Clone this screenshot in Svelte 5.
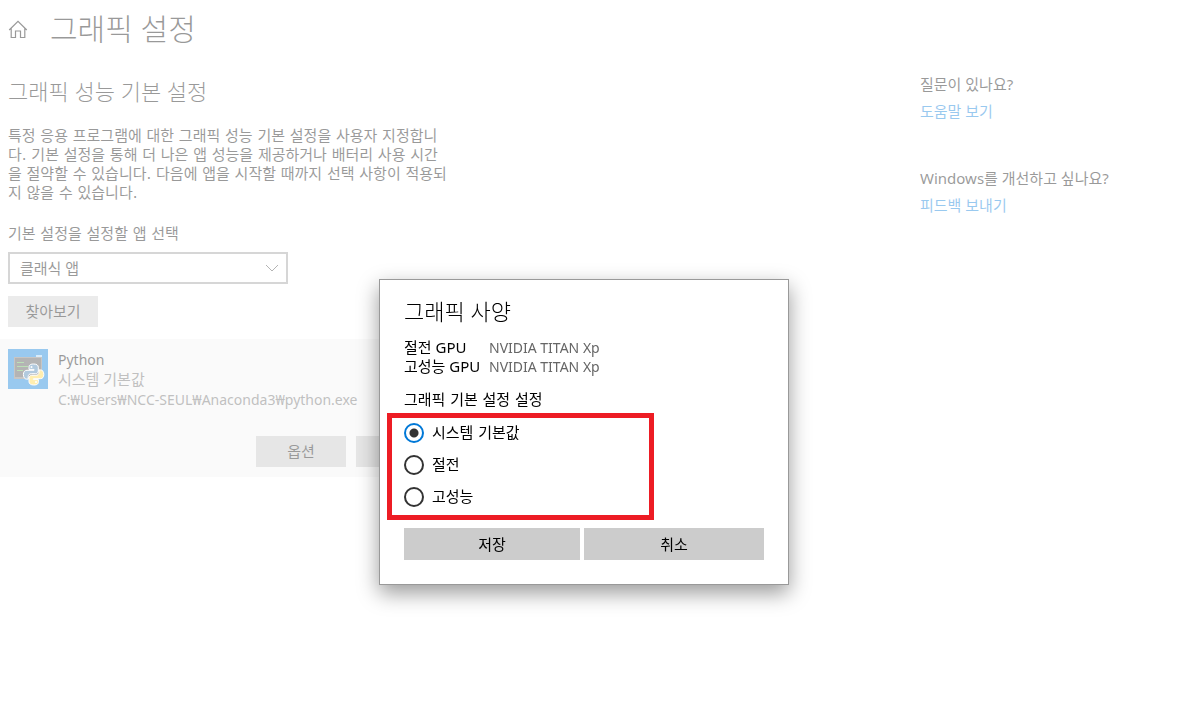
<script>
  const description = [
    "특정 응용 프로그램에 대한 그래픽 성능 기본 설정을 사용자 지정합니",
    "다. 기본 설정을 통해 더 나은 앱 성능을 제공하거나 배터리 사용 시간",
    "을 절약할 수 있습니다. 다음에 앱을 시작할 때까지 선택 사항이 적용되",
    "지 않을 수 있습니다."
  ];
  const gpus = [
    { name: "절전 GPU", model: "NVIDIA TITAN Xp" },
    { name: "고성능 GPU", model: "NVIDIA TITAN Xp" }
  ];
  const options = [
    { value: "default", label: "시스템 기본값" },
    { value: "saving", label: "절전" },
    { value: "high", label: "고성능" }
  ];
  let preference = $state("default");
  let appType = $state("classic");
</script>

<div class="page">
  <header>
    <a class="home" href="#home" aria-label="홈">
      <svg viewBox="0 0 20 20" width="20" height="20">
        <path d="M1.2 11 L10 2.4 L18.8 11 M3.200 9.400 V18.500 H7.500 V12 H12.500 V18.500 H16.800 V9.400" />
      </svg>
    </a>
    <h1>그래픽 설정</h1>
  </header>

  <div class="columns">
    <main>
      <h2>그래픽 성능 기본 설정</h2>
      <p class="description">
        {#each description as line}
          <span>{line}</span>
        {/each}
      </p>

      <label class="field-label" for="app-type">기본 설정을 설정할 앱 선택</label>
      <div class="select">
        <select id="app-type" bind:value={appType}>
          <option value="classic">클래식 앱</option>
          <option value="universal">유니버설 앱</option>
        </select>
        <svg viewBox="0 0 14 8" width="14" height="8">
          <path d="M1 1 L7 7 L13 1" />
        </svg>
      </div>
      <button class="browse">찾아보기</button>

      <section class="app">
        <div class="app-info">
          <svg class="app-icon" viewBox="0 0 40 40" width="40" height="40">
            <rect width="40" height="40" fill="#0078d7" />
            <rect x="6" y="8" width="28" height="22" fill="#77716b" />
            <rect x="7" y="9" width="26" height="19" fill="#454545" />
            <path d="M28 7h6" stroke="#9fd0f5" stroke-width="2" />
            <path d="M9 13.5h7M9 17.5h11M9 21.5h6" stroke="#55b44c" />
            <g stroke="#fff" stroke-width="1">
              <path
                fill="#3f7cac"
                d="M25.6 15c-4 0-4.6 1.6-4.6 3.2v2.2h5v.9h-7c-2.2 0-3.6 1.5-3.6 4.2s1.2 4.6 3.2 4.6h1.6v-2.4c0-1.9 1.3-3 3.1-3h4.4c1.5 0 2.6-1.2 2.6-2.7v-3.8c0-2-1.7-3.2-4.7-3.2z" />
              <path
                fill="#ffd43b"
                d="M25.8 36c4 0 4.6-1.6 4.6-3.2v-2.2h-5v-.9h7c2.2 0 3.4-1.5 3.4-4.2s-1.200-4.600-3.200-4.600h-1.600v2.400c0 1.900-1.300 3-3.100 3h-4.200c-1.500 0-2.700 1.200-2.700 2.700v3.800c0 2 1.800 3.200 4.800 3.200z" />
            </g>
            <circle cx="23.5" cy="18" r="1" fill="#fff" />
            <circle cx="28" cy="33" r="1" fill="#fff" />
          </svg>
          <div class="app-text">
            <strong>Python</strong>
            <span>시스템 기본값</span>
            <span class="path">C:₩Users₩NCC-SEUL₩Anaconda3₩python.exe</span>
          </div>
        </div>
        <div class="app-actions">
          <button>옵션</button>
          <button>제거</button>
        </div>
      </section>
    </main>

    <aside>
      <div class="help">
        <span>질문이 있나요?</span>
        <a href="#help">도움말 보기</a>
      </div>
      <div class="help">
        <span>Windows를 개선하고 싶나요?</span>
        <a href="#feedback">피드백 보내기</a>
      </div>
    </aside>
  </div>
</div>

<div class="scrim"></div>

<div class="dialog" role="dialog" aria-labelledby="dialog-title">
  <h2 id="dialog-title">그래픽 사양</h2>
  <dl>
    {#each gpus as gpu}
      <dt>{gpu.name}</dt>
      <dd>{gpu.model}</dd>
    {/each}
  </dl>
  <p id="preference-label">그래픽 기본 설정 설정</p>
  <div class="preferences" role="radiogroup" aria-labelledby="preference-label">
    {#each options as option}
      <label>
        <input type="radio" name="preference" value={option.value} bind:group={preference} />
        {option.label}
      </label>
    {/each}
  </div>
  <div class="dialog-actions">
    <button>저장</button>
    <button>취소</button>
  </div>
</div>

<style>
  :global(body) {
    background: #fff;
    color: #000;
    font: 15px/19px "Noto Sans", "Noto Sans CJK KR", sans-serif;
  }
  h1,
  h2,
  p,
  dl,
  dd {
    margin: 0;
  }
  h1,
  h2 {
    font-weight: 300;
  }
  /* wider word gaps for the Korean-only copy */
  p,
  .field-label,
  .preferences {
    font-family: "DejaVu Sans", "Noto Sans CJK KR", sans-serif;
  }
  button,
  select {
    border: 0;
    border-radius: 0;
    padding: 0;
    color: inherit;
    font: inherit;
  }
  button {
    height: 31px;
    background: #ccc;
  }
  svg {
    display: block;
  }
  header {
    display: flex;
    align-items: center;
    gap: 22px;
    padding: 9px 8px 0;
  }
  h1 {
    font-size: 30px;
    line-height: 40px;
  }
  h2 {
    font-size: 22px;
    line-height: 28px;
  }
  .home path,
  .select path {
    fill: none;
    stroke: #000;
    stroke-width: 1.2;
  }
  .select path {
    stroke: #444;
    stroke-width: 1;
  }
  .columns {
    display: flex;
    padding-top: 26px;
  }
  main {
    flex: 1;
    padding-top: 2px;
  }
  main > h2,
  .description,
  .field-label {
    padding-left: 8px;
  }
  .description {
    margin: 22px 0;
  }
  .description span,
  .field-label {
    display: block;
  }
  .select {
    display: grid;
    align-items: center;
    width: 280px;
    margin: 8px 8px 12px;
  }
  .select select,
  .select svg {
    grid-area: 1 / 1;
  }
  .select select {
    appearance: none;
    height: 32px;
    padding: 0 10px;
    border: 2px solid #999;
    background: #fff;
  }
  .select svg {
    justify-self: end;
    margin-right: 9px;
    pointer-events: none;
  }
  .browse {
    width: 90px;
    margin-left: 8px;
  }
  .app {
    box-sizing: border-box;
    width: 456px;
    margin-top: 12px;
    padding: 10px 10px 10px 8px;
    background: #f2f2f2;
  }
  .app-info {
    display: flex;
    gap: 10px;
  }
  .app-text {
    display: flex;
    flex-direction: column;
    gap: 1px;
    padding-top: 1px;
    color: #616161;
  }
  .app-text strong {
    color: #000;
    font-weight: 400;
  }
  .app-text strong,
  .path,
  dd {
    font-size: 14px;
  }
  .app-actions {
    display: flex;
    justify-content: flex-end;
    gap: 10px;
    margin-top: 27px;
  }
  .app-actions button {
    width: 90px;
    background: #c1c1c1;
  }
  aside {
    width: 258px;
  }
  .help {
    display: flex;
    flex-direction: column;
    gap: 8px;
    margin-bottom: 48px;
  }
  .help a {
    color: #0078d7;
    text-decoration: none;
  }
  .scrim {
    position: fixed;
    inset: 0;
    background: rgba(255, 255, 255, 0.6);
  }
  .dialog {
    position: absolute;
    top: 279px;
    left: calc(50% - 210px);
    box-sizing: border-box;
    width: 410px;
    padding: 17px 24px 24px;
    border: 1px solid #999;
    background: #fff;
    box-shadow: 0 8px 20px rgba(0, 0, 0, 0.4);
  }
  dl {
    display: grid;
    grid-template-columns: 85px 1fr;
    margin: 13px 0 15px;
  }
  dd {
    color: #666;
  }
  .preferences {
    display: flex;
    flex-direction: column;
    gap: 12px;
    box-sizing: border-box;
    width: 267px;
    margin: 3px 0 8px -17px;
    padding: 5px 12px 8px;
    border: 5px solid #ed1c24;
  }
  .preferences label {
    display: flex;
    align-items: center;
    gap: 8px;
    line-height: 20px;
  }
  input {
    appearance: none;
    box-sizing: border-box;
    width: 20px;
    height: 20px;
    margin: 0;
    border: 2px solid #333;
    border-radius: 50%;
  }
  input:checked {
    border-color: #0078d7;
    background: radial-gradient(circle, #333 4px, #fff 5px);
  }
  .dialog-actions {
    display: grid;
    grid-template-columns: 176px 1fr;
    gap: 4px;
  }
  .dialog-actions button {
    height: 32px;
  }
</style>
